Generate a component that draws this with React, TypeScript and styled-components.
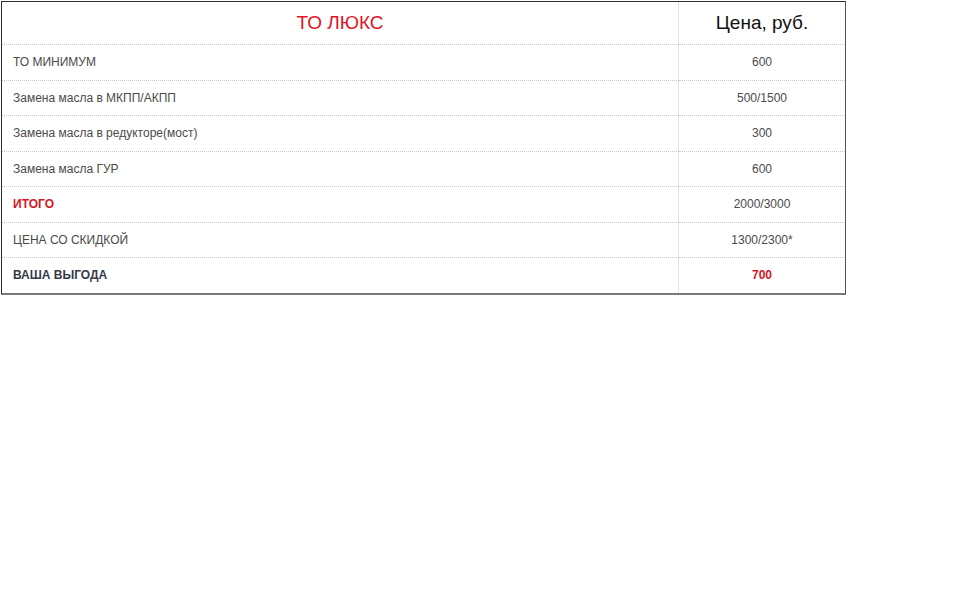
import React from "react";
import styled, { createGlobalStyle } from "styled-components";

const GlobalStyle = createGlobalStyle`
  html, body {
    margin: 0;
    padding: 0;
    background: #fff;
    font-family: "Liberation Sans", Arial, sans-serif;
  }
`;

const Page = styled.div`
  padding: 1px 0 0 1px;
`;

const PriceTable = styled.table`
  width: 845px;
  border-collapse: separate;
  border-spacing: 0;
  border-top: 1px solid #2e2e2e;
  border-left: 1px solid #2e2e2e;
  border-right: 1px solid #555;
  border-bottom: 2px solid #7a7a7a;
  table-layout: fixed;
`;

const HeadCell = styled.th<{ $red?: boolean }>`
  height: 42px;
  padding: 0;
  font-size: 19px;
  font-weight: normal;
  text-align: center;
  color: ${(p) => (p.$red ? "#e1141f" : "#111")};
  border-bottom: 1px dotted #c8c8c8;
  &:first-child {
    border-right: 1px solid #e2e2e2;
  }
`;

const Cell = styled.td<{ $center?: boolean; $bold?: boolean; $red?: boolean }>`
  height: 34.5px;
  padding: ${(p) => (p.$center ? "0" : "0 0 0 11px")};
  font-size: 12px;
  text-align: ${(p) => (p.$center ? "center" : "left")};
  font-weight: ${(p) => (p.$bold ? "bold" : "normal")};
  color: ${(p) => (p.$red ? "#d4161f" : p.$bold ? "#343a48" : "#4a4a4a")};
  &:first-child {
    border-right: 1px solid #e2e2e2;
  }
  tr:not(:last-child) > & {
    border-bottom: 1px dotted #c8c8c8;
  }
`;

const rows = [
  { name: "ТО МИНИМУМ", price: "600" },
  { name: "Замена масла в МКПП/АКПП", price: "500/1500" },
  { name: "Замена масла в редукторе(мост)", price: "300" },
  { name: "Замена масла ГУР", price: "600" },
  { name: "ИТОГО", price: "2000/3000", nameRed: true },
  { name: "ЦЕНА СО СКИДКОЙ", price: "1300/2300*" },
  { name: "ВАША ВЫГОДА", price: "700", nameBold: true, priceRed: true },
];

const App = () => {
  return (
    <Page>
      <GlobalStyle />
      <PriceTable>
        <colgroup>
          <col style={{ width: 677 }} />
          <col />
        </colgroup>
        <thead>
          <tr>
            <HeadCell $red>ТО ЛЮКС</HeadCell>
            <HeadCell>Цена, руб.</HeadCell>
          </tr>
        </thead>
        <tbody>
          {rows.map((r) => (
            <tr key={r.name}>
              <Cell $bold={r.nameRed || r.nameBold} $red={r.nameRed}>
                {r.name}
              </Cell>
              <Cell $center $bold={r.priceRed} $red={r.priceRed}>
                {r.price}
              </Cell>
            </tr>
          ))}
        </tbody>
      </PriceTable>
    </Page>
  );
};

export default App;
